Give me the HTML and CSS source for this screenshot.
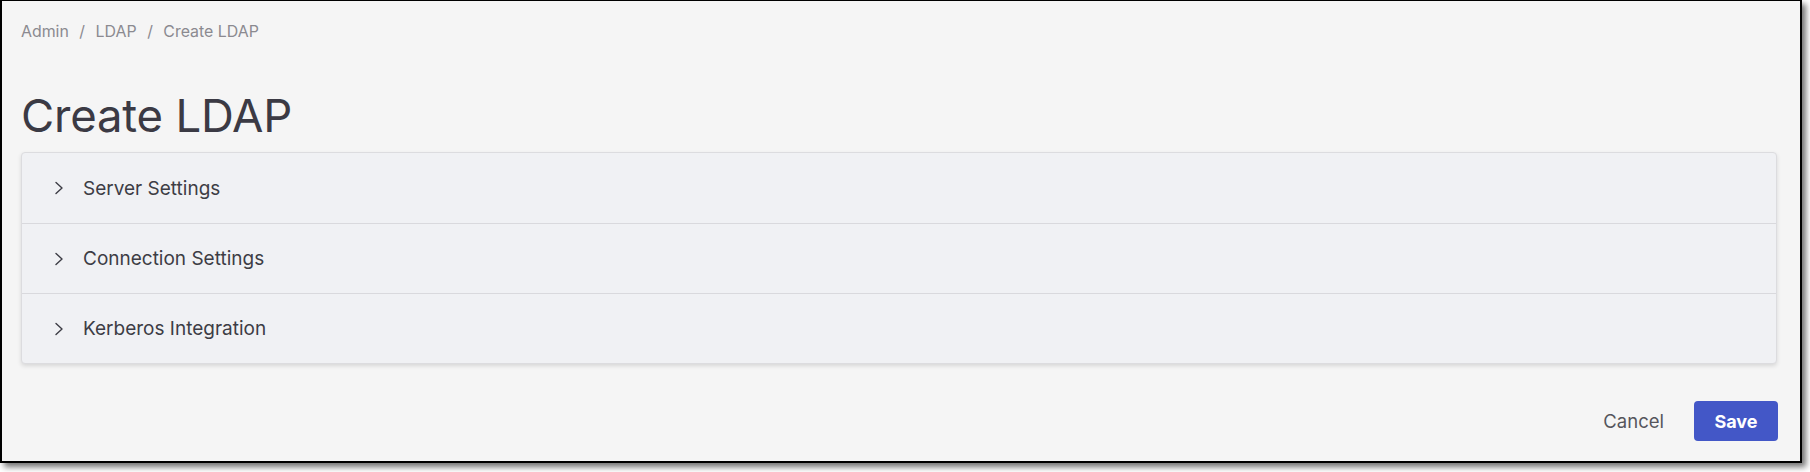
FILE: index.html
```html
<!DOCTYPE html>
<html lang="en">
<head>
<meta charset="utf-8">
<title>Create LDAP</title>
<link rel="stylesheet" href="styles.css">
</head>
<body>
<div class="frame">
  <nav class="breadcrumb">
    <span class="crumb">Admin</span>
    <span class="sep">/</span>
    <span class="crumb">LDAP</span>
    <span class="sep">/</span>
    <span class="crumb">Create LDAP</span>
  </nav>
  <h1 class="title">Create LDAP</h1>
  <div class="card">
    <div class="row first">
      <svg class="chev" width="10" height="14" viewBox="0 0 10 14"><path d="M2 1.5 L8 7 L2 12.5" fill="none" stroke="#3d3d45" stroke-width="1.4" stroke-linecap="round" stroke-linejoin="round"/></svg>
      <span class="label">Server Settings</span>
    </div>
    <div class="row">
      <svg class="chev" width="10" height="14" viewBox="0 0 10 14"><path d="M2 1.5 L8 7 L2 12.5" fill="none" stroke="#3d3d45" stroke-width="1.4" stroke-linecap="round" stroke-linejoin="round"/></svg>
      <span class="label">Connection Settings</span>
    </div>
    <div class="row">
      <svg class="chev" width="10" height="14" viewBox="0 0 10 14"><path d="M2 1.5 L8 7 L2 12.5" fill="none" stroke="#3d3d45" stroke-width="1.4" stroke-linecap="round" stroke-linejoin="round"/></svg>
      <span class="label">Kerberos Integration</span>
    </div>
  </div>
  <div class="footer">
    <span class="cancel">Cancel</span>
    <button class="save">Save</button>
  </div>
</div>
</body>
</html>
```
FILE: styles.css
```css
html, body {
  margin: 0;
  padding: 0;
  background: #ffffff;
}
body {
  font-family: Inter, "Noto Sans", "Liberation Sans", sans-serif;
  width: 1810px;
  height: 472px;
  overflow: hidden;
}
.frame {
  box-sizing: border-box;
  width: 1802px;
  height: 463px;
  border: 2px solid #000;
  border-top-width: 1px;
  background: #f5f5f5;
  box-shadow: 4px 4px 6px rgba(0, 0, 0, 0.55);
  padding: 21px 23px 0 19px;
}
.breadcrumb {
  display: flex;
  align-items: center;
  font-size: 15.9px;
  line-height: 20px;
  color: #8b8a90;
}
.sep {
  margin: 0 10.5px;
}
.title {
  margin: 46px 0 0 0;
  font-size: 45.5px;
  line-height: 56px;
  font-weight: 400;
  color: #3b3a44;
  letter-spacing: -0.2px;
}
.card {
  margin-top: 8px;
  background: #f0f1f4;
  border: 1px solid #dcdcdf;
  border-radius: 4px;
  box-shadow: 0 2px 4px rgba(0, 0, 0, 0.12);
}
.row {
  height: 69px;
  display: flex;
  align-items: center;
  padding-left: 32px;
  gap: 19px;
}
.row.first {
  height: 70px;
}
.row + .row {
  border-top: 1px solid #d9d9dd;
}
.chev {
  display: block;
  flex: none;
}
.label {
  font-size: 19px;
  color: #3d3d45;
}
.footer {
  margin-top: 37px;
  display: flex;
  justify-content: flex-end;
  align-items: center;
  gap: 30px;
  margin-right: -1px;
}
.cancel {
  font-size: 18.5px;
  color: #55555c;
}
.save {
  font-family: inherit;
  width: 84px;
  height: 40px;
  border: none;
  border-radius: 4px;
  background: #4357c7;
  color: #ffffff;
  font-size: 18px;
  font-weight: 700;
  padding: 0;
}
```
